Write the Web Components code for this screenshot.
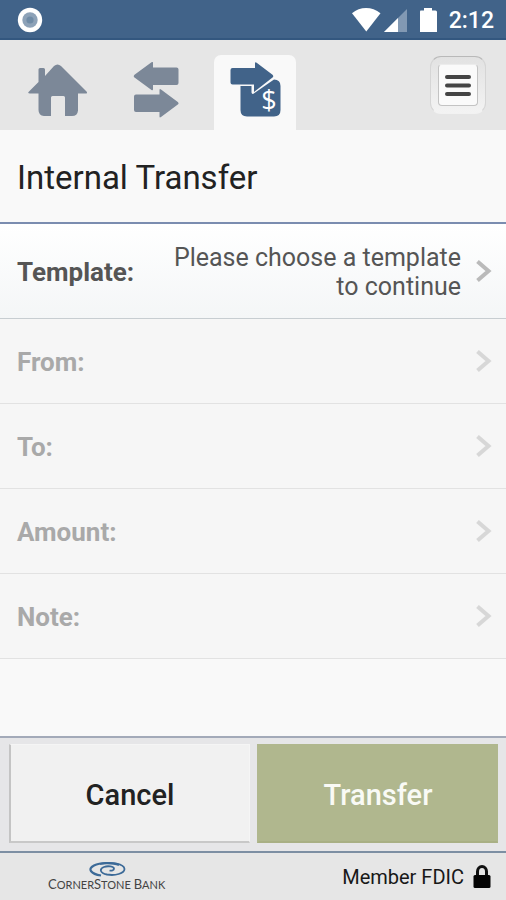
<!DOCTYPE html>
<html lang="en">
<head>
<meta charset="utf-8">
<meta name="viewport" content="width=device-width, initial-scale=1">
<title>Internal Transfer</title>
<style>
body { margin: 0; background: #f9f9f9; font-family: Roboto, "Liberation Sans", sans-serif; }
</style>
</head>
<body>
<bank-app></bank-app>
<script>
function define(name, html, setup) {
  const template = document.createElement('template');
  template.innerHTML = '<style>*{box-sizing:border-box}svg{display:block;flex:none}button{font:inherit;color:inherit;cursor:pointer;margin:0}</style>' + html;
  customElements.define(name, class extends HTMLElement {
    constructor() {
      super();
      this.attachShadow({ mode: 'open' }).append(template.content.cloneNode(true));
    }
    connectedCallback() { if (setup) setup(this, this.shadowRoot); }
  });
}

define('status-bar', `
<style>
:host { display: flex; align-items: center; justify-content: space-between; height: 40px; padding: 0 12px 0 17px; background: #416389; border-bottom: 2px solid #33577f; color: #fff; }
.right { display: flex; align-items: center; font-size: 23px; line-height: 28px; font-weight: 500; }
.time { margin-left: 11px; padding-top: 3px; }
svg { margin-top: 2px; }
</style>
<svg width="26" height="26" viewBox="0 0 26 26" aria-hidden="true"><circle cx="13" cy="13" r="12.2" fill="#fff"/><circle cx="13" cy="13" r="7.7" fill="#8da2b8"/><circle cx="13" cy="13" r="3.6" fill="#6f8ba6"/></svg>
<div class="right">
<svg width="88" height="28" viewBox="0 0 88 28" aria-hidden="true">
<path d="M2 7.3C10 .2 22 .2 30.500 7.300L16.300 25.500Z" fill="#fff"/>
<path d="M34 26L57 3V26Z" fill="#8299b3"/><path d="M34 26L48 12V26Z" fill="#fff"/>
<path d="M70.500 4.500H74V2H82V4.500H85.500Q87 4.500 87 6V26H70V6Q70 4.500 70.500 4.500Z" fill="#fff"/>
</svg>
<span class="time">2:12</span>
</div>`);

define('nav-tab', `
<style>
:host { display: block; flex: 0 0 82px; height: 75px; }
button { display: flex; justify-content: center; align-items: flex-start; width: 100%; height: 100%; border: 0; padding: 7px 0 0; background: none; border-radius: 7px 7px 0 0; }
:host([active]) button { background: #f9f9f9; }
</style>
<button type="button" role="tab"><slot></slot></button>`, (el, root) => {
  const b = root.querySelector('button');
  b.setAttribute('aria-label', el.getAttribute('label'));
  b.setAttribute('aria-selected', el.hasAttribute('active'));
});

define('nav-bar', `
<style>
:host { display: flex; align-items: flex-end; height: 90px; padding: 0 20px 0 16px; background: #e6e6e6; }
.tabs { display: flex; gap: 17px; }
.menu { margin: 0 0 16px auto; width: 56px; height: 58px; padding: 7px; border: 1px solid #d5d5d5; border-top-color: #b9b9b9; border-bottom-color: #f2f2f2; border-radius: 11px; background: linear-gradient(#e2e2e2, #f3f3f3); }
.menu span { display: flex; align-items: center; justify-content: center; height: 42px; border: 1px solid #c3c3c3; border-top-color: #ececec; border-radius: 4px; background: #fafafa; }
</style>
<div class="tabs" role="tablist">
<nav-tab label="Home"><svg width="60" height="56" viewBox="0 0 60 56" fill="#7c8898"><path d="M11.500 7.500Q11.500 6 13 6H16.500Q18 6 18 7.500V14L27 4Q30.500 .8 34 4L59.500 29.500Q61 31.500 58.500 31.500H51V48.500Q50.500 54 45 54H38V35.500Q38 34 36.500 34H25.500Q24 34 24 35.500V54H17Q11.500 53.500 11.500 48V31.500H3Q0 31.500 2 29.500L11.500 20Z"/></svg></nav-tab>
<nav-tab label="Transfers"><svg width="46" height="58" viewBox="0 0 46 58" fill="#7c8898"><path d="M1.500 12.800L18.500 .3Q20 -.7 20 1V5.500H43.500Q45.500 5.500 45.500 7.500V21Q45.500 23 43.500 23H20V27Q20 29 18.500 28L1.500 15.600Q0 14.200 1.500 12.800Z"/><path d="M44.800 40L28 27.500Q26.500 26.500 26.500 28V32.500H3Q1 32.500 1 34.500V48Q1 50 3 50H26.500V54.500Q26.500 56 28 55L44.800 42.600Q46.300 41.300 44.800 40Z"/></svg></nav-tab>
<nav-tab label="Internal transfer" active><svg width="52" height="58" viewBox="0 0 52 58"><path d="M11.500 24H22.500V30.500Q23 33 25.500 31L45 17.500Q51.500 17.500 51.500 24V48Q51.500 54.500 45 54.500H18Q11.500 54.500 11.500 48Z" fill="#416389"/><path d="M3.500 6H26V1.500Q26 -.5 28 1L43.500 12.800Q45 14.300 43.500 15.500L25 30V22.500H3.500Q1.500 22.500 1.500 20.500V8Q1.500 6 3.500 6Z" fill="#416389"/><text x="40" y="48" text-anchor="middle" font-family="Open Sans, sans-serif" font-size="27" fill="#fff">$</text></svg></nav-tab>
</div>
<button class="menu" type="button" aria-label="Menu"><span><svg width="28" height="24" viewBox="0 0 28 24" stroke="#444" stroke-width="4" stroke-linecap="round"><path d="M3 4H25M3 12.500H25M3 21H25"/></svg></span></button>`);

define('form-row', `
<style>
:host { display: block; }
button { display: flex; align-items: center; width: 100%; min-height: 85px; padding: 2px 14px 0 17px; border: 0; border-bottom: 1px solid #e2e2e2; background: #f6f6f6; text-align: left; color: #a9a9a9; font-size: 25px; line-height: 29px; }
.label { font-size: 26px; font-weight: 700; white-space: nowrap; }
.value { flex: 1; margin: 0 14px 0 20px; text-align: right; }
:host([enabled]) button { min-height: 95px; background: linear-gradient(#fff, #f4f6f7); border-bottom-color: #c7cdd1; color: #555; }
svg { opacity: .5; }
:host([enabled]) svg { opacity: 1; }
</style>
<button type="button"><span class="label"></span><span class="value"><slot></slot></span><svg width="17" height="24" viewBox="0 0 17 24" fill="none" stroke="#bababa" stroke-width="4" aria-hidden="true"><path d="M2.500 1.500L13.500 11L2.500 20.500"/></svg></button>`, (el, root) => {
  root.querySelector('.label').textContent = el.getAttribute('label');
  root.querySelector('button').disabled = !el.hasAttribute('enabled');
});

define('action-button', `
<style>
:host { display: flex; flex: 1; }
button { flex: 1; height: 99px; border: 1px solid #f5f5f5; border-left: 2px solid #c4c4c4; border-bottom: 2px solid #c8c8c8; background: #f1f1f1; color: #222; font-size: 29px; line-height: 34px; font-weight: 500; padding: 3px 0 0; }
:host([primary]) button { background: #b0b78e; border-color: #b0b78e; border-bottom-color: #a9b085; color: #f9faf5; }
</style>
<button type="button"><slot></slot></button>`);

define('action-bar', `
<style>
:host { display: flex; gap: 7px; padding: 6px 8px 8px 9px; background: #e6e6e8; border-top: 2px solid #a3aab9; border-bottom: 2px solid #7d8fa3; }
</style>
<action-button>Cancel</action-button><action-button primary>Transfer</action-button>`);

define('bank-logo', `
<style>
:host { display: flex; flex-direction: column; align-items: center; color: #444; font-family: Lato, sans-serif; font-size: 11px; line-height: 14px; }
.big { font-size: 13px; }
svg { margin-top: 1px; }
span { white-space: nowrap; }
</style>
<svg width="38" height="15" viewBox="0 0 38 15" fill="none" stroke="#3c6a98" aria-hidden="true"><path d="M31 3C25 .5 12 .5 6 3.500C-1 7 3 12 13 13.500" stroke-width="2.200"/><path d="M12 1.800C24 -.5 36 2 36.500 7C36.500 11.500 27 14 19 12.500C12 11 11 7 16 5C20 3.500 26 4.500 26 6.800C26 8.500 23.500 9 21.500 8.500" stroke-width="1.800"/></svg>
<span><span class="big">C</span>ORNER<span class="big">S</span>TONE <span class="big">B</span>ANK</span>`);

define('app-footer', `
<style>
:host { display: flex; align-items: center; justify-content: space-between; height: 47px; padding: 0 15px 0 48px; background: #e6e6e6; }
.fdic { display: flex; align-items: center; gap: 9px; color: #181818; font-size: 20px; line-height: 24px; }
</style>
<bank-logo></bank-logo>
<div class="fdic"><span>Member FDIC</span><svg width="18" height="23" viewBox="0 0 18 23" aria-hidden="true"><path d="M4.500 11V6.500A4.500 5 0 0 1 13.500 6.500V11" fill="none" stroke="#111" stroke-width="3"/><rect x=".5" y="10" width="17" height="13" rx="1.500" fill="#050505"/></svg></div>`);

define('bank-app', `
<style>
:host { display: flex; flex-direction: column; min-height: 100vh; }
h1 { margin: 0; padding: 29px 17px 25px; font-size: 33px; line-height: 38px; font-weight: 400; color: #222; border-bottom: 2px solid #7b8db0; }
main { flex: 1; }
</style>
<status-bar></status-bar>
<nav-bar></nav-bar>
<main>
<h1>Internal Transfer</h1>
<form-row label="Template:" enabled>Please choose a template<br>to continue</form-row>
<form-row label="From:"></form-row>
<form-row label="To:"></form-row>
<form-row label="Amount:"></form-row>
<form-row label="Note:"></form-row>
</main>
<action-bar></action-bar>
<app-footer></app-footer>`);
</script>
</body>
</html>
